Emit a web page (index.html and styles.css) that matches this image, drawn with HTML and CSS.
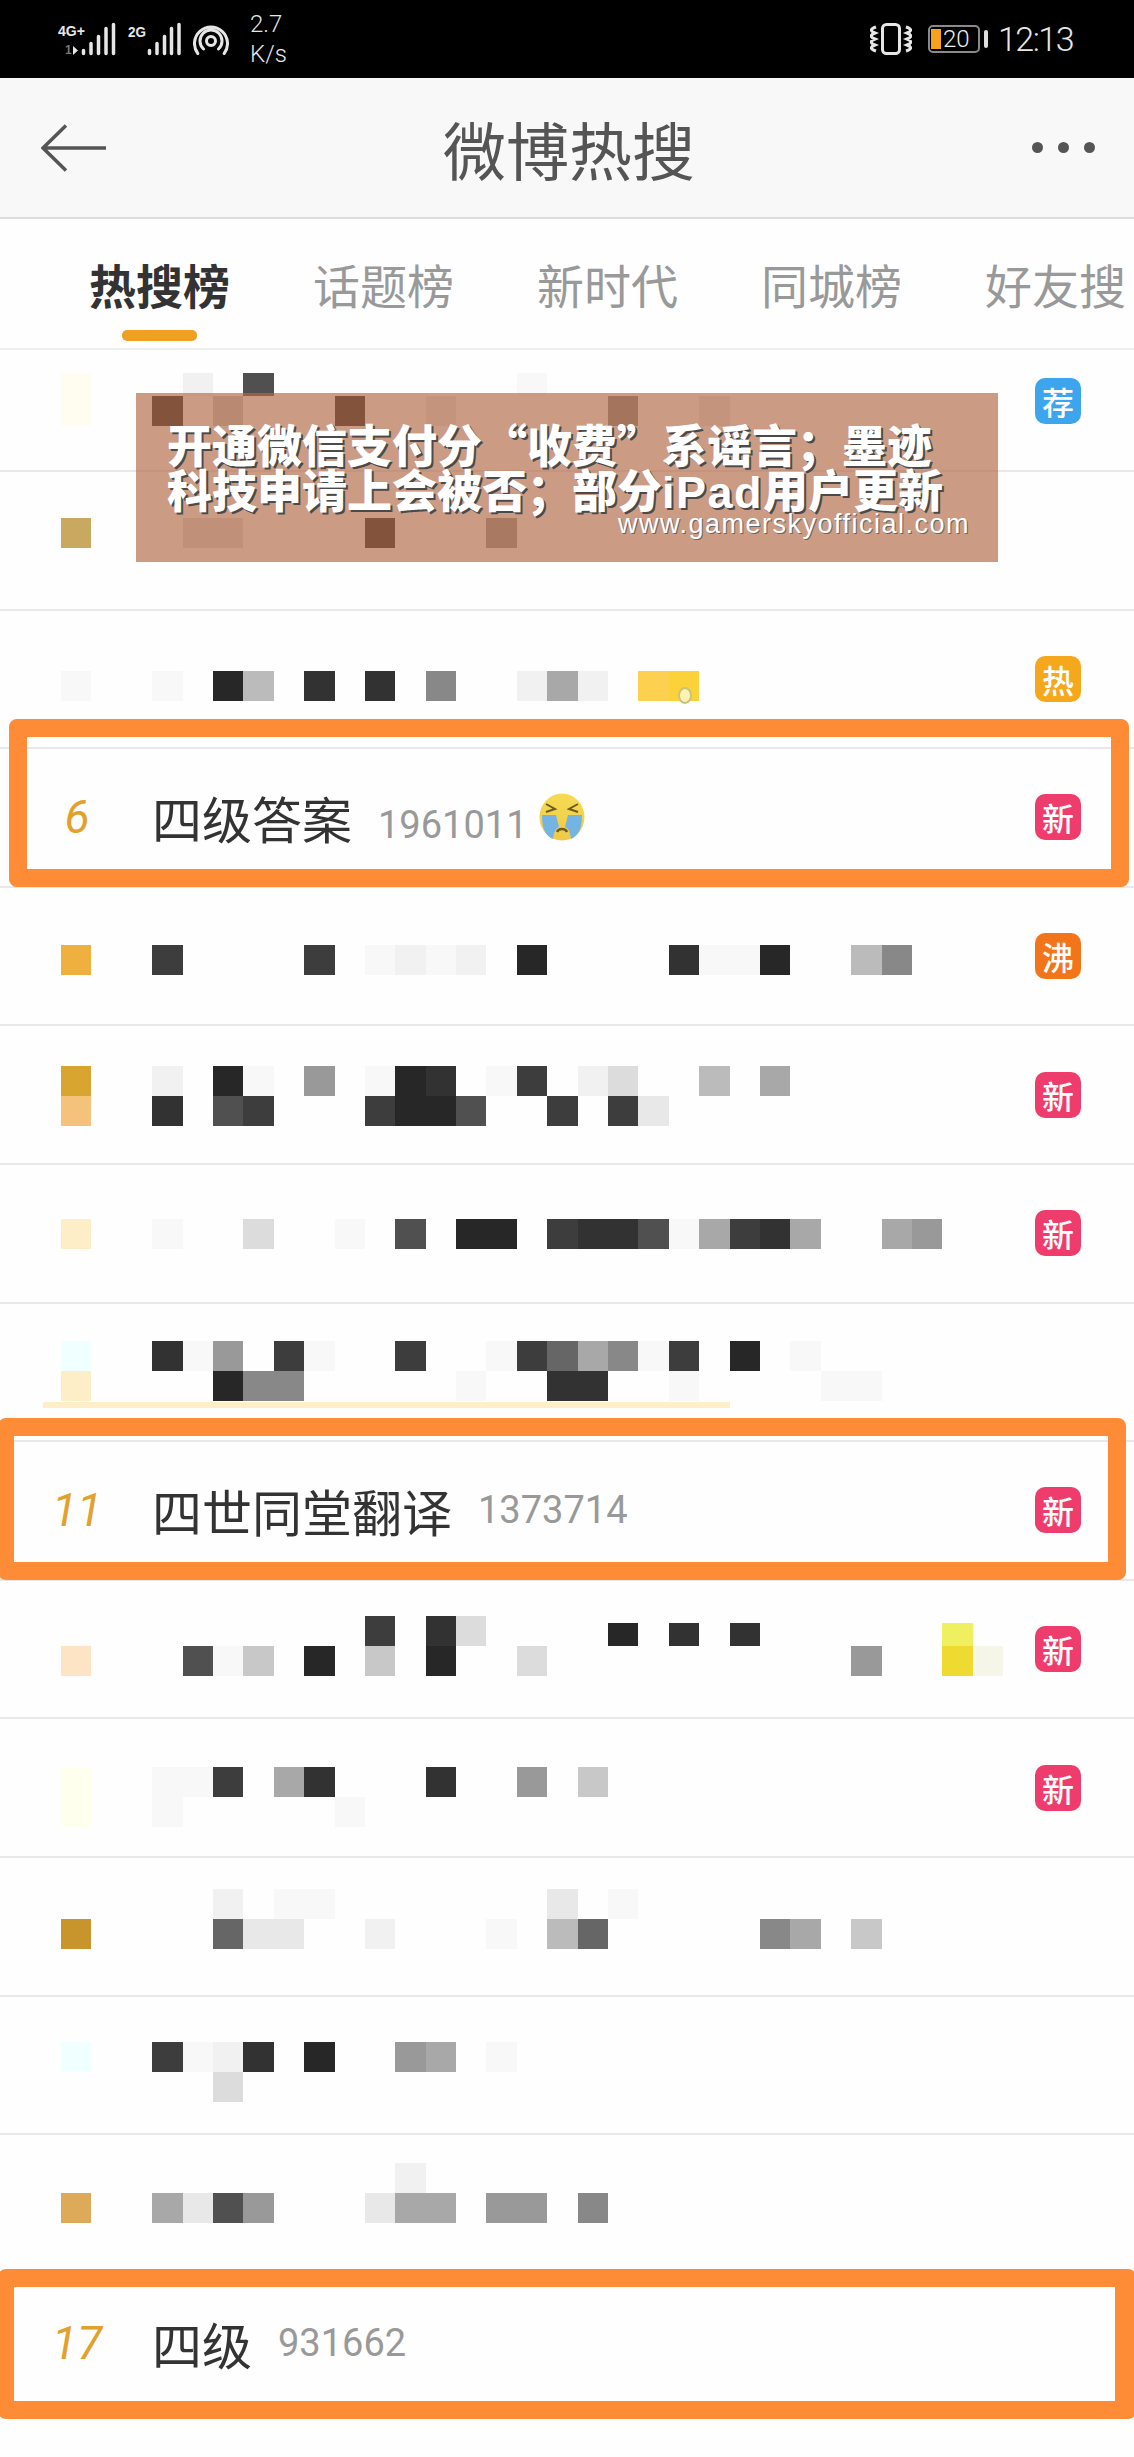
FILE: index.html
```html
<!DOCTYPE html>
<html lang="zh-CN">
<head>
<meta charset="utf-8">
<title>微博热搜</title>
<link rel="stylesheet" href="styles.css">
</head>
<body>
<div class="page">
  <header class="status">
    <svg class="sig sig-a" viewBox="0 -2 60 36"><text class="net" x="0" y="13" textLength="27" lengthAdjust="spacingAndGlyphs">4G+</text><text class="net-dim" x="7" y="31">1</text><path class="tri" d="M15 23v9l5-4.500z"/><g class="bars"><path d="M25.500 27.500v3M33 20.500v10M40.500 13.500v17M48 5.500v25M55.500 1.500v29"/></g></svg>
    <svg class="sig sig-b" viewBox="0 -2 54 36"><text class="net" x="0" y="14" textLength="18" lengthAdjust="spacingAndGlyphs">2G</text><g class="bars"><path d="M21.500 27.500v3M29 20.500v10M36.500 13.500v17M43.500 5.500v25M51 1.500v29"/></g></svg>
    <svg class="hotspot" viewBox="0 0 36 32"><circle cx="18" cy="18" r="4.500"/><path d="M10.500 26a11 11 0 1 1 15 0M4.800 30.500a16.500 16.500 0 1 1 26.400 0"/></svg>
    <div class="speed"><span>2.7</span><span>K/s</span></div>
    <div class="status-right">
      <svg class="vibrate" viewBox="0 0 42 32"><rect x="12.500" y="1.500" width="17" height="29" rx="4"/><path d="M6 4c-6 2-6 4-1 6c-5 2-5 4 0 6c-5 2-5 4 0 6c-5 2-5 4 1 6M36 4c6 2 6 4 1 6c5 2 5 4 0 6c5 2 5 4 0 6c5 2 5 4-1 6"/></svg>
      <div class="battery"><div class="battery-fill"></div><span class="battery-num">20</span></div>
      <div class="battery-cap"></div>
      <div class="clock">12:13</div>
    </div>
  </header>

  <nav class="nav">
    <svg class="back" viewBox="0 0 65 48"><path d="M25 1.500L2 24l23 22.500M2 24h63"/></svg>
    <h1 class="nav-title">微博热搜</h1>
    <div class="more"><i></i><i></i><i></i></div>
  </nav>

  <div class="tabs">
    <div class="tab active">热搜榜<span class="tab-bar"></span></div>
    <div class="tab">话题榜</div>
    <div class="tab">新时代</div>
    <div class="tab">同城榜</div>
    <div class="tab">好友搜</div>
  </div>

  <main class="list">
    <div class="row row-first">
      <div class="mosaic top16">
        <div class="mline"><i class="c0 t1 short"></i><i class="c4 k13 short"></i><i class="c6 k4 short"></i><i class="c15 k14 short"></i></div>
        <div class="mline"><i class="c0 t1"></i><i class="c3 k1"></i><i class="c5 k10"></i><i class="c9 k1"></i><i class="c12 k12"></i><i class="c18 k6"></i><i class="c21 k12"></i></div>
      </div>
      <span class="badge rec">荐</span>
    </div>
    <div class="row">
      <div class="mosaic top46">
        <div class="mline"><i class="c0 t2"></i><i class="c4 k11"></i><i class="c5 k11"></i><i class="c10 k1"></i><i class="c14 k7"></i></div>
      </div>
    </div>
    <div class="row">
      <div class="mosaic top60">
        <div class="mline"><i class="c0 k14"></i><i class="c3 k14"></i><i class="c5 k1"></i><i class="c6 k9"></i><i class="c8 k2"></i><i class="c10 k2"></i><i class="c12 k6"></i><i class="c15 k13"></i><i class="c16 k8"></i><i class="c17 k13"></i><i class="c19 t4"></i><i class="c20 t5 notched"></i></div>
      </div>
      <span class="badge hot">热</span>
    </div>

    <div class="row row-hit">
      <span class="rank">6</span>
      <span class="term">四级答案</span>
      <span class="count count-low">1961011</span>
      <svg class="emoji" viewBox="0 0 46 48">
        <defs><linearGradient id="face" x1="0" y1="0" x2="0" y2="1"><stop offset="0" stop-color="#f6dc52"/><stop offset="1" stop-color="#f0c84a"/></linearGradient></defs>
        <ellipse cx="23" cy="24" rx="22.500" ry="23.500" fill="url(#face)"/>
        <path d="M3 22h14l3 12c-3 1-5 4-6 12c-7-3-11-9-11-24zM43 22H29l-3 12c3 1 5 4 6 12c7-3 11-9 11-24z" fill="#74b4e2"/>
        <path d="M7 11l9 5-9 3M39 11l-9 5 9 3" fill="none" stroke="#6e5a24" stroke-width="2"/>
        <path d="M18 39c1.500-4 8.500-4 10 0" fill="none" stroke="#6e5a24" stroke-width="2.500"/>
      </svg>
      <span class="badge new">新</span>
      <div class="frame frame-a"></div>
    </div>

    <div class="row">
      <div class="mosaic top57">
        <div class="mline"><i class="c0 t6"></i><i class="c3 k3"></i><i class="c8 k3"></i><i class="c10 k14"></i><i class="c11 k13"></i><i class="c12 k14"></i><i class="c13 k13"></i><i class="c15 k1"></i><i class="c20 k2"></i><i class="c21 k14"></i><i class="c22 k14"></i><i class="c23 k1"></i><i class="c26 k9"></i><i class="c27 k6"></i></div>
      </div>
      <span class="badge boil">沸</span>
    </div>
    <div class="row">
      <div class="mosaic top40">
        <div class="mline"><i class="c0 t7"></i><i class="c3 k13"></i><i class="c5 k1"></i><i class="c6 k14"></i><i class="c8 k7"></i><i class="c10 k14"></i><i class="c11 k1"></i><i class="c12 k2"></i><i class="c14 k14"></i><i class="c15 k3"></i><i class="c17 k13"></i><i class="c18 k11"></i><i class="c21 k9"></i><i class="c23 k8"></i></div>
        <div class="mline"><i class="c0 t8"></i><i class="c3 k2"></i><i class="c5 k4"></i><i class="c6 k3"></i><i class="c10 k3"></i><i class="c11 k1"></i><i class="c12 k1"></i><i class="c13 k4"></i><i class="c16 k3"></i><i class="c18 k3"></i><i class="c19 k12"></i></div>
      </div>
      <span class="badge new">新</span>
    </div>
    <div class="row">
      <div class="mosaic top54">
        <div class="mline"><i class="c0 t9"></i><i class="c3 k14"></i><i class="c6 k11"></i><i class="c9 k14"></i><i class="c11 k4"></i><i class="c13 k1"></i><i class="c14 k1"></i><i class="c16 k3"></i><i class="c17 k2"></i><i class="c18 k2"></i><i class="c19 k4"></i><i class="c20 k14"></i><i class="c21 k8"></i><i class="c22 k3"></i><i class="c23 k2"></i><i class="c24 k8"></i><i class="c27 k8"></i><i class="c28 k7"></i></div>
      </div>
      <span class="badge new">新</span>
    </div>
    <div class="row">
      <div class="mosaic top37">
        <div class="mline"><i class="c0 t10"></i><i class="c3 k2"></i><i class="c4 k14"></i><i class="c5 k7"></i><i class="c7 k3"></i><i class="c8 k14"></i><i class="c11 k3"></i><i class="c14 k14"></i><i class="c15 k3"></i><i class="c16 k5"></i><i class="c17 k8"></i><i class="c18 k6"></i><i class="c19 k14"></i><i class="c20 k3"></i><i class="c22 k1"></i><i class="c24 k14"></i></div>
        <div class="mline"><i class="c0 t9"></i><i class="c5 k1"></i><i class="c6 k6"></i><i class="c7 k6"></i><i class="c13 k14"></i><i class="c16 k2"></i><i class="c17 k2"></i><i class="c20 k14"></i><i class="c25 k14"></i><i class="c26 k14"></i></div>
        <div class="smear"></div>
      </div>
    </div>

    <div class="row row-hit">
      <span class="rank">11</span>
      <span class="term">四世同堂翻译</span>
      <span class="count">1373714</span>
      <span class="badge new">新</span>
      <div class="frame frame-b"></div>
    </div>

    <div class="row">
      <div class="mosaic top35">
        <div class="mline"><i class="c10 k3"></i><i class="c12 k2"></i><i class="c13 k11"></i><i class="c18 k1 short"></i><i class="c20 k2 short"></i><i class="c22 k2 short"></i><i class="c29 t12 short"></i></div>
        <div class="mline"><i class="c0 t11"></i><i class="c4 k4"></i><i class="c5 k14"></i><i class="c6 k10"></i><i class="c8 k1"></i><i class="c10 k10"></i><i class="c12 k1"></i><i class="c15 k11"></i><i class="c26 k7"></i><i class="c29 t13"></i><i class="c30 t14"></i></div>
      </div>
      <span class="badge new">新</span>
    </div>
    <div class="row">
      <div class="mosaic top48">
        <div class="mline"><i class="c0 t15"></i><i class="c3 k14"></i><i class="c4 k14"></i><i class="c5 k3"></i><i class="c7 k8"></i><i class="c8 k2"></i><i class="c12 k2"></i><i class="c15 k7"></i><i class="c17 k10"></i></div>
        <div class="mline"><i class="c0 t15"></i><i class="c3 k14"></i><i class="c9 k14"></i></div>
      </div>
      <span class="badge new">新</span>
    </div>
    <div class="row">
      <div class="mosaic top31">
        <div class="mline"><i class="c5 k13"></i><i class="c7 k14"></i><i class="c8 k14"></i><i class="c16 k12"></i><i class="c18 k14"></i></div>
        <div class="mline"><i class="c0 t16"></i><i class="c5 k5"></i><i class="c6 k12"></i><i class="c7 k12"></i><i class="c10 k13"></i><i class="c14 k14"></i><i class="c16 k9"></i><i class="c17 k5"></i><i class="c23 k6"></i><i class="c24 k8"></i><i class="c26 k10"></i></div>
      </div>
    </div>
    <div class="row">
      <div class="mosaic top45">
        <div class="mline"><i class="c0 t10"></i><i class="c3 k3"></i><i class="c4 k14"></i><i class="c5 k13"></i><i class="c6 k2"></i><i class="c8 k1"></i><i class="c11 k7"></i><i class="c12 k8"></i><i class="c14 k14"></i></div>
        <div class="mline"><i class="c5 k11"></i></div>
      </div>
    </div>
    <div class="row">
      <div class="mosaic top28">
        <div class="mline"><i class="c11 k13"></i></div>
        <div class="mline"><i class="c0 t17"></i><i class="c3 k8"></i><i class="c4 k12"></i><i class="c5 k4"></i><i class="c6 k7"></i><i class="c10 k12"></i><i class="c11 k8"></i><i class="c12 k8"></i><i class="c14 k7"></i><i class="c15 k7"></i><i class="c17 k6"></i></div>
      </div>
    </div>

    <div class="row row-hit row-last">
      <span class="rank">17</span>
      <span class="term">四级</span>
      <span class="count">931662</span>
      <div class="frame frame-c"></div>
    </div>
  </main>

  <aside class="banner">
    <p class="banner-line">开通微信支付分“收费”系谣言；墨迹</p>
    <p class="banner-line">科技申请上会被否；部分<span class="banner-latin">iPad</span>用户更新</p>
    <p class="banner-site">www.gamerskyofficial.com</p>
  </aside>
</div>
</body>
</html>
```
FILE: styles.css
```css
* { box-sizing: border-box; }
html, body { margin: 0; padding: 0; }
body { background: #fefefe; font-family: "Noto Sans CJK SC", "Noto Sans", sans-serif; }
.page { position: relative; width: 1134px; height: 2457px; overflow: hidden; }

/* status bar */
.status { display: flex; align-items: center; height: 78px; background: #000; padding: 0 61px 0 58px; color: #e6e6e6; font-family: Roboto, sans-serif; }
.sig { height: 36px; flex: none; }
.sig-a { width: 60px; }
.sig-b { width: 54px; margin-left: 10px; }
.net { fill: #e6e6e6; font: 700 14px "Liberation Sans", sans-serif; }
.net-dim { fill: #777; font: 700 12px "Liberation Sans", sans-serif; }
.tri { fill: #e6e6e6; }
.bars path { fill: none; stroke: #e6e6e6; stroke-width: 3.500; stroke-linecap: round; }
.hotspot { width: 36px; height: 32px; margin-left: 11px; flex: none; fill: none; stroke: #e6e6e6; stroke-width: 3; stroke-linecap: round; }
.speed { display: flex; flex-direction: column; margin-left: 21px; font-size: 24px; line-height: 30px; font-weight: 300; }
.status-right { display: flex; align-items: center; margin-left: auto; }
.vibrate { width: 42px; height: 32px; fill: none; stroke: #e6e6e6; stroke-width: 3; }
.battery { position: relative; display: flex; align-items: center; width: 52px; height: 28px; margin-left: 16px; padding-left: 13px; border: 2px solid #8a8a8a; border-radius: 5px; font-size: 24px; }
.battery-fill { position: absolute; left: 1px; top: 2px; bottom: 2px; width: 10px; background: #f5a21e; }
.battery-num { position: relative; color: #eee; font-weight: 300; }
.battery-cap { width: 4px; height: 18px; margin-left: 4px; background: #ddd; border-radius: 2px; }
.clock { margin-left: 10px; font-size: 34px; font-weight: 300; letter-spacing: -1.500px; color: #e6e6e6; }

/* navigation */
.nav { position: relative; display: flex; align-items: center; justify-content: space-between; height: 141px; padding: 0 37px 0 41px; background: #f8f8f8; border-bottom: 2px solid #dcdcdc; }
.back { width: 65px; height: 48px; fill: none; stroke: #555; stroke-width: 3.500; }
.nav-title { margin: 0; font-size: 63px; font-weight: 400; line-height: 70px; color: #555; }
.more { display: flex; gap: 15px; width: 65px; }
.more i { width: 11px; height: 11px; border-radius: 50%; background: #555; }

/* tabs */
.tabs { display: flex; gap: 83px; height: 131px; padding: 41px 0 0 89px; border-bottom: 2px solid #eee; white-space: nowrap; }
.tab { display: flex; flex-direction: column; align-items: center; font-size: 47px; line-height: 48px; color: #999; flex: none; }
.tab.active { font-weight: 700; color: #333; }
.tab-bar { width: 75px; height: 11px; margin-top: 22px; border-radius: 5px; background: #f0a020; }

/* list */
.row { position: relative; display: flex; align-items: center; height: 138.600px; padding: 0 53px 0 61px; border-bottom: 2px solid #e8e8ec; }
.row-first { height: 122px; }
.row-first .badge { margin-top: -18px; }
.row-hit { padding-left: 46px; }
.row-last { border-bottom: 0; }

.mosaic { align-self: flex-start; flex: none; width: 943px; }
.mline { display: grid; grid-template-columns: repeat(31, 30.400px); height: 30px; }
.mline i { display: block; min-width: 0; }
.mline .short { height: 23px; align-self: end; }
.smear { width: 687px; height: 6px; margin: 1px 0 0 -18px; background: #feefc8; }
.top16 { margin-top: 16px; } .top28 { margin-top: 28px; } .top31 { margin-top: 31px; } .top35 { margin-top: 35px; }
.top37 { margin-top: 37px; } .top40 { margin-top: 40px; } .top45 { margin-top: 45px; } .top46 { margin-top: 46px; }
.top48 { margin-top: 48px; } .top54 { margin-top: 54px; } .top57 { margin-top: 57px; } .top60 { margin-top: 60px; }

.c0 { grid-column: 1; } .c3 { grid-column: 4; } .c4 { grid-column: 5; } .c5 { grid-column: 6; } .c6 { grid-column: 7; }
.c7 { grid-column: 8; } .c8 { grid-column: 9; } .c9 { grid-column: 10; } .c10 { grid-column: 11; } .c11 { grid-column: 12; }
.c12 { grid-column: 13; } .c13 { grid-column: 14; } .c14 { grid-column: 15; } .c15 { grid-column: 16; } .c16 { grid-column: 17; }
.c17 { grid-column: 18; } .c18 { grid-column: 19; } .c19 { grid-column: 20; } .c20 { grid-column: 21; } .c21 { grid-column: 22; }
.c22 { grid-column: 23; } .c23 { grid-column: 24; } .c24 { grid-column: 25; } .c25 { grid-column: 26; } .c26 { grid-column: 27; }
.c27 { grid-column: 28; } .c28 { grid-column: 29; } .c29 { grid-column: 30; } .c30 { grid-column: 31; }

.k1 { background: #272727; } .k2 { background: #323232; } .k3 { background: #3d3d3d; } .k4 { background: #505050; }
.k5 { background: #666; } .k6 { background: #888; } .k7 { background: #999; } .k8 { background: #a8a8a8; }
.k9 { background: #bbb; } .k10 { background: #c8c8c8; } .k11 { background: #dcdcdc; } .k12 { background: #e8e8e8; }
.k13 { background: #f1f1f1; } .k14 { background: #f8f8f8; }

.t1 { background: #fffdf0; } .t2 { background: #c8a95f; } .t4 { background: #fdd050; } .t5 { background: #fcd23a; }
.t6 { background: #f0b040; } .t7 { background: #d8a630; } .t8 { background: #f4c27a; } .t9 { background: #fdeec8; }
.t10 { background: #f0ffff; } .t11 { background: #fde4c4; } .t12 { background: #eef060; } .t13 { background: #eeda30; }
.t14 { background: #f6f6e8; } .t15 { background: #ffffee; } .t16 { background: #c8952c; } .t17 { background: #dcaa58; }

.notched { position: relative; }
.notched::after { content: ""; position: absolute; right: 7px; bottom: -3px; width: 10px; height: 13px; border: 2px solid #c8c27a; border-radius: 50%; background: #fdf2b4; }

.rank { flex: none; width: 62px; text-align: center; font-family: Roboto, sans-serif; font-style: italic; font-size: 46px; color: #e2a12c; }
.term { margin-left: 44px; font-size: 50px; line-height: 60px; color: #333; white-space: nowrap; }
.count { margin-left: 26px; font-family: Roboto, sans-serif; font-size: 38px; color: #999; }
.count-low { margin-top: 16px; }
.emoji { width: 46px; height: 48px; margin-left: 11px; flex: none; }

.badge { flex: none; display: flex; align-items: center; justify-content: center; width: 46px; height: 46px; margin-left: auto; border-radius: 10px; font-size: 32px; font-weight: 500; line-height: 46px; color: #fff; }
.rec { background: #3da5ee; }
.hot { background: #f5a81c; }
.boil { background: #f2751a; }
.new { background: #ee3d6c; }

/* hand-drawn highlights */
.frame { position: absolute; border: 18px solid #fe8b35; border-radius: 8px; pointer-events: none; }
.frame-a { top: -30px; bottom: -1px; left: 9px; right: 5px; }
.frame-b { top: -24px; bottom: -1px; left: -2px; right: 8px; border-left-width: 16px; }
.frame-c { top: -5px; bottom: -7px; left: -2px; right: -2px; border-left-width: 16px; border-right-width: 21px; }

/* publisher banner */
.banner { position: absolute; left: 136px; top: 393px; width: 862px; height: 169px; padding: 28px 30px 0 31px; background: rgba(179, 106, 72, .67); color: #fff; }
.banner-line { margin: 0; font-size: 45px; line-height: 45px; font-weight: 900; white-space: nowrap; text-shadow: 2px 2px 0 #4a4a4a; }
.banner-latin { font-family: "Liberation Sans", sans-serif; font-weight: 700; letter-spacing: 1.500px; }
.banner-site { margin: -6px -2px 0 0; text-align: right; font-family: "Liberation Sans", sans-serif; font-size: 27px; line-height: 30px; letter-spacing: 1.500px; text-shadow: 1px 1px 0 #666; }
```
